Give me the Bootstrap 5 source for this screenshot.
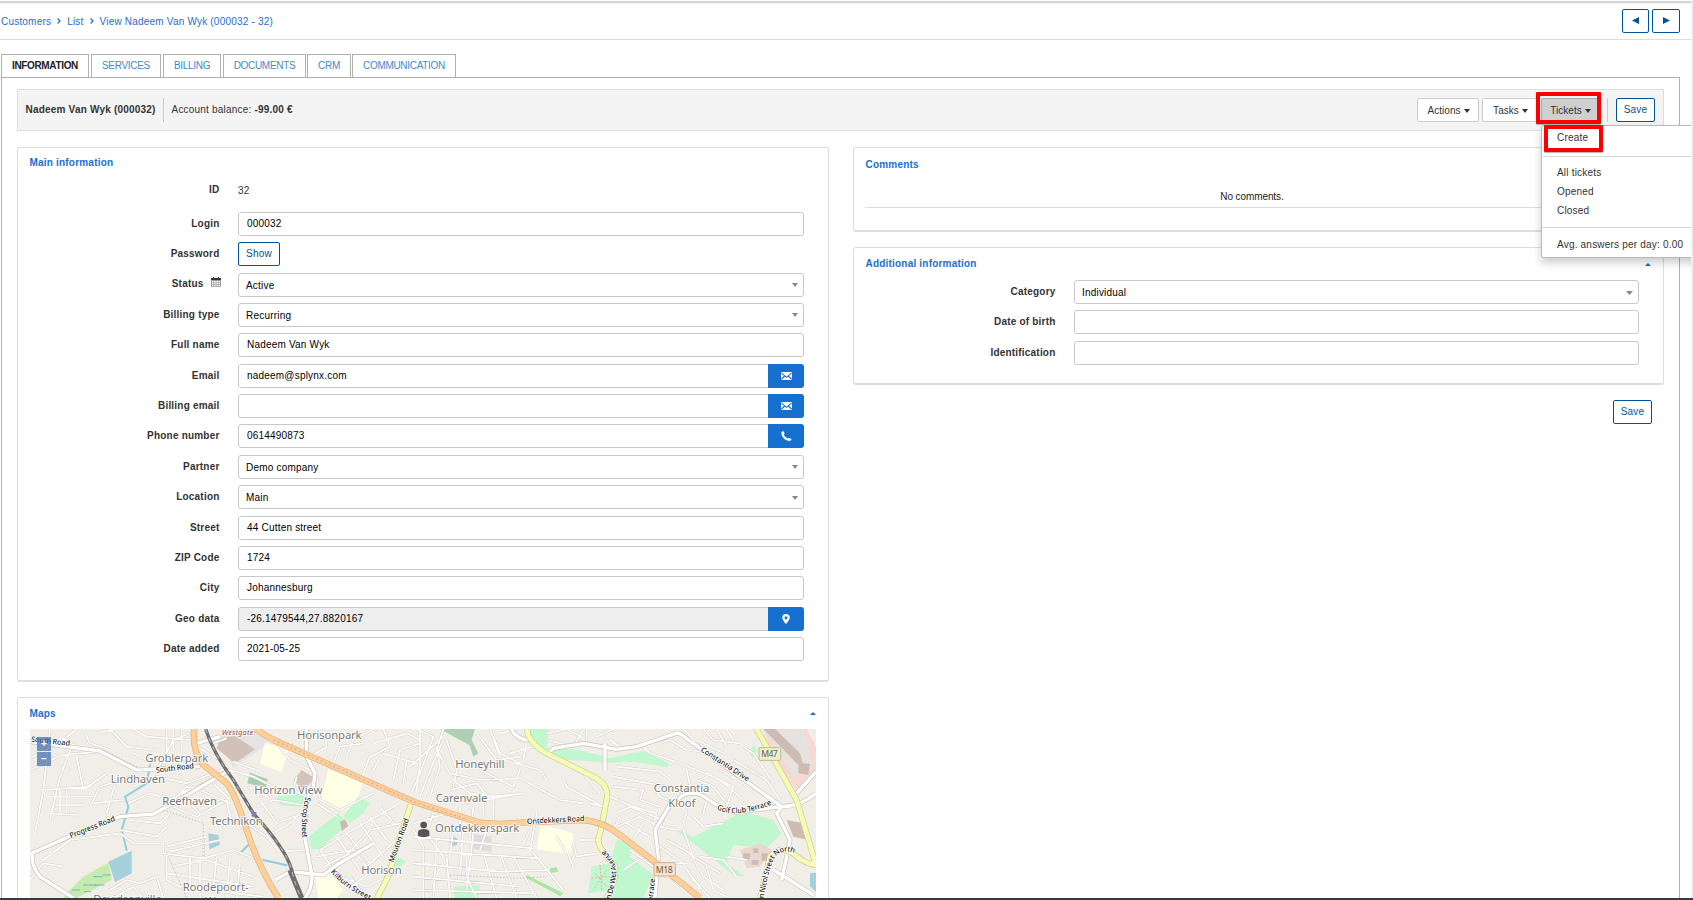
<!DOCTYPE html>
<html lang="en">
<head>
<meta charset="utf-8">
<title>View Nadeem Van Wyk</title>
<link href="https://cdn.jsdelivr.net/npm/bootstrap@5.3.0/dist/css/bootstrap.min.css" rel="stylesheet">
<style>
body{font-family:"Liberation Sans",Arial,sans-serif;font-size:10px;line-height:14px;letter-spacing:.2px;color:#333;height:900px;overflow:hidden;background:#fff}
a{text-decoration:none}
.page-wrap{height:900px;border-right:2px solid #f0f0f0;overflow:hidden}
.topline{height:4px;background:linear-gradient(#fff 0 1px,#d6d8d8 1px 3px,#efefef 3px)}
.crumbs{height:36px;border-bottom:1px solid #ddd;padding:0 11px 0 1px;color:#1a6fcf}
.crumbs a{color:#1a6fcf}
.crumbs svg{margin:0 6px 1px 6px}
.btn{--bs-btn-font-size:10px;--bs-btn-line-height:14px;--bs-btn-border-radius:2px;height:24px;padding:0;letter-spacing:.2px;display:inline-flex;align-items:center;justify-content:center}
.btn-blue{border:1px solid #00549a;color:#00549a;background:#fff}
.btn-plain{border:1px solid #ccc;color:#333;background:#fff;letter-spacing:.05px;padding:2px 0 0 1px}
.btn-plain svg{margin-left:3px}
.tabs-line{margin:14px 0 0 1px;gap:2px;position:relative;z-index:1;height:23px}
.tabs-line .nav-link{border:1px solid #b0b0b0;border-bottom:0;border-radius:0;padding:4px 0 0;height:23px;line-height:14px;color:#428bca;letter-spacing:-.3px;text-align:center;background:#fff}
.tabs-line .nav-link.active{color:#222;font-weight:700;letter-spacing:-.35px}
.tab-body{margin:0 11px 0 1px;border:1px solid #b0b0b0;padding:11px 15px 0 15px;height:860px}
.infobar{height:42px;background:#f4f4f4;border:1px solid #ddd;padding:0 8px 0 7.5px}
.vline{width:1px;height:24px;background:#ccc}
.panel{border:1px solid #ddd;border-bottom-width:2px;border-radius:3px;background:#fff;position:relative}
.panel-name{color:#1a6fcf;font-weight:700;padding-left:11.5px}
.frow{height:24.36px;margin-bottom:6.03px;display:flex}
.flabel{width:201.5px;margin-right:18.5px;text-align:right;font-weight:700;line-height:23px;flex:none}
.fbox{width:566px}
.form-control{height:24px;border:1px solid #c8c8c8;border-radius:3px;padding:0 8px;font-size:10px;line-height:22px;color:#000;min-height:0}
.pick{padding:2px 5px 0 7px;display:flex;justify-content:space-between;align-items:center}
.pick svg{margin-top:-1px}
.off{background:#eee}
.input-group{height:24px;width:566px}
.icobtn{width:36px;background:#1570d0;border:0;border-radius:0 3px 3px 0}
.fold{position:absolute;right:12px}
.drop{position:absolute;left:0;top:27px;width:170px;height:133px;background:#fff;border:1px solid #bbb;border-radius:3px;box-shadow:0 5px 9px rgba(0,0,0,.2);z-index:5;padding:5px 0}
.drop a{display:block;color:#333;padding-left:15px;height:19px;line-height:14px;white-space:nowrap}
.drop hr{margin:0;border:0;border-top:1px solid #d8d8d8;opacity:1}
.ring{position:absolute;border:4px solid #fb0000;border-radius:1px;z-index:8;box-shadow:0 1px 1px rgba(0,0,0,.3)}
.zoomer{position:absolute;left:7px;top:8px;display:grid;gap:1px}
.zoomer span{width:14px;height:14px;background:rgba(60,105,170,.7);color:#fff;font-weight:700;text-align:center;line-height:13px;letter-spacing:0}
.floorbar{position:fixed;left:0;right:0;bottom:0;height:2px;background:#323c41;z-index:9}
.mapart{display:block}
.mapart text{font-family:"Noto Sans",sans-serif;letter-spacing:0;paint-order:stroke;stroke:#fff;stroke-width:5px;stroke-linejoin:round}
.place{font-size:34px;fill:#777}
.street{font-size:22.5px;fill:#222;font-weight:500}
</style>
</head>
<body>
<svg width="0" height="0" class="position-absolute">
 <symbol id="dn" viewBox="0 0 6 4"><path d="M0 0h6L3 4z"/></symbol>
 <symbol id="up" viewBox="0 0 6 3"><path d="M0 3h6L3 0z"/></symbol>
 <symbol id="mail" viewBox="0 0 11 8"><path fill="#fff" d="M0 0h11v8H0z"/><path d="M.3.8 5.5 5.3 10.7.8M.3 7.3 3.700 4M10.700 7.300 7.300 4" fill="none" stroke="#1570d0" stroke-width="1.1"/></symbol>
</svg>
<div class="page-wrap">
 <div class="topline"></div>
 <div class="crumbs d-flex align-items-center justify-content-between">
  <div><a href="#">Customers</a><svg width="4" height="6" viewBox="0 0 4 6"><path d="M.6.5 3 3 .6 5.5" fill="none" stroke="#1a6fcf" stroke-width="1.2"/></svg><a href="#">List</a><svg width="4" height="6" viewBox="0 0 4 6"><path d="M.6.5 3 3 .6 5.5" fill="none" stroke="#1a6fcf" stroke-width="1.2"/></svg><a href="#">View Nadeem Van Wyk (000032 - 32)</a></div>
  <div class="d-flex pb-0" style="gap:3px;margin-top:-1px">
   <button class="btn btn-blue" style="width:27px"><svg width="7" height="7"><path d="M7 0v7L0 3.5z" fill="#00549a"/></svg></button>
   <button class="btn btn-blue" style="width:28px"><svg width="7" height="7"><path d="M0 0v7l7-3.5z" fill="#00549a"/></svg></button>
  </div>
 </div>
 <nav class="nav tabs-line flex-nowrap">
  <a class="nav-link active" style="width:88px">INFORMATION</a>
  <a class="nav-link" style="width:70px">SERVICES</a>
  <a class="nav-link" style="width:58px">BILLING</a>
  <a class="nav-link" style="width:83px">DOCUMENTS</a>
  <a class="nav-link" style="width:44px;margin-left:-1px">CRM</a>
  <a class="nav-link" style="width:104px;margin-left:-1px">COMMUNICATION</a>
 </nav>
 <div class="tab-body">
  <div class="infobar d-flex align-items-center">
   <b>Nadeem Van Wyk (000032)</b><span class="vline" style="margin:0 8px 0 7px"></span><span>Account balance: <b>-99.00 €</b></span>
   <button class="btn btn-plain ms-auto" style="width:62px">Actions<svg width="6" height="4" fill="#333"><use href="#dn"/></svg></button>
   <button class="btn btn-plain" style="width:56px;margin-left:3px">Tasks<svg width="6" height="4" fill="#333"><use href="#dn"/></svg></button>
   <div class="position-relative" style="margin-left:3px">
    <button class="btn btn-plain" style="width:58px;background:#cfcfcf;border-color:#aaa">Tickets<svg width="6" height="4" fill="#333"><use href="#dn"/></svg></button>
    <div class="ring" style="left:-5px;top:-6px;width:65px;height:32px"></div>
    <div class="drop"><a>Create</a><hr style="margin:6px 0 9px"><a>All tickets</a><a>Opened</a><a>Closed</a><hr style="margin:4px 0 10px"><a>Avg. answers per day: 0.00</a></div>
    <div class="ring" style="left:3px;top:27px;width:59px;height:27px"></div>
   </div>
   <span class="vline" style="margin:0 8px"></span>
   <button class="btn btn-blue" style="width:39px">Save</button>
  </div>
  <div class="d-flex align-items-start justify-content-between" style="margin-top:16px">
   <div style="width:812px">
    <section class="panel" style="height:535px">
     <div class="panel-name" style="padding-top:8px;height:34px">Main information</div>
     <div class="frow" style="margin-bottom:5.5px"><div class="flabel" style="line-height:15px">ID</div><div style="line-height:17px">32</div></div>
     <div class="frow"><div class="flabel">Login</div><div class="form-control fbox">000032</div></div>
     <div class="frow"><div class="flabel">Password</div><button class="btn btn-blue" style="width:42px">Show</button></div>
     <div class="frow"><div class="flabel" style="line-height:22px">Status <svg class="ms-1" style="margin:-3px -1px 0 0" width="10" height="10" viewBox="0 0 10 10"><path d="M0 1h10v9H0z" fill="#999"/><path d="M0 1h10v2H0zM2 0h1v1H2zM7 0h1v1H7z" fill="#333"/><path d="M1 4h1.500v1.500H1zM3.200 4h1.500v1.500H3.200zM5.400 4h1.500v1.500H5.400zM7.600 4h1.500v1.500H7.600zM1 6h1.500v1.300H1zM3.200 6h1.500v1.300H3.200zM5.400 6h1.500v1.300H5.400zM7.600 6h1.500v1.300H7.600zM1 8h1.500v1.300H1zM3.200 8h1.500v1.300H3.200zM5.400 8h1.500v1.300H5.400zM7.600 8h1.500v1.300H7.600z" fill="#fff"/></svg></div><div class="form-control fbox pick">Active<svg width="6" height="4" fill="#888"><use href="#dn"/></svg></div></div>
     <div class="frow"><div class="flabel">Billing type</div><div class="form-control fbox pick">Recurring<svg width="6" height="4" fill="#888"><use href="#dn"/></svg></div></div>
     <div class="frow"><div class="flabel">Full name</div><div class="form-control fbox">Nadeem Van Wyk</div></div>
     <div class="frow"><div class="flabel">Email</div><div class="input-group"><div class="form-control">nadeem@splynx.com</div><button class="btn icobtn"><svg width="11" height="8"><use href="#mail"/></svg></button></div></div>
     <div class="frow"><div class="flabel">Billing email</div><div class="input-group"><div class="form-control"></div><button class="btn icobtn"><svg width="11" height="8"><use href="#mail"/></svg></button></div></div>
     <div class="frow"><div class="flabel">Phone number</div><div class="input-group"><div class="form-control">0614490873</div><button class="btn icobtn"><svg width="11" height="10" viewBox="0 0 11 10"><path d="M.3 1.500Q1 0 2.300 0L3.700 2.600 2.700 3.800Q4 6.200 6.700 7.400L7.900 6.700 10.700 8.200Q10.200 9.900 8.300 10 4 9.500 1.700 6 .2 3.700.3 1.500z" fill="#fff"/></svg></button></div></div>
     <div class="frow"><div class="flabel">Partner</div><div class="form-control fbox pick">Demo company<svg width="6" height="4" fill="#888"><use href="#dn"/></svg></div></div>
     <div class="frow"><div class="flabel">Location</div><div class="form-control fbox pick">Main<svg width="6" height="4" fill="#888"><use href="#dn"/></svg></div></div>
     <div class="frow"><div class="flabel">Street</div><div class="form-control fbox">44 Cutten street</div></div>
     <div class="frow"><div class="flabel">ZIP Code</div><div class="form-control fbox">1724</div></div>
     <div class="frow"><div class="flabel">City</div><div class="form-control fbox">Johannesburg</div></div>
     <div class="frow"><div class="flabel">Geo data</div><div class="input-group"><div class="form-control off">-26.1479544,27.8820167</div><button class="btn icobtn"><svg width="8" height="10" viewBox="0 0 8 10"><path d="M4 0a3.700 3.700 0 0 1 3.700 3.700C7.700 6 4 10 4 10S.3 6 .3 3.700A3.700 3.700 0 0 1 4 0zm0 2.200a1.500 1.500 0 1 0 0 3 1.500 1.500 0 0 0 0-3z" fill="#fff" fill-rule="evenodd"/></svg></button></div></div>
     <div class="frow"><div class="flabel">Date added</div><div class="form-control fbox">2021-05-25</div></div>
    </section>
    <section class="panel" style="height:260px;margin-top:15px">
     <div class="panel-name" style="padding-top:9px;height:31px">Maps</div>
     <svg class="fold" style="top:14px" width="6" height="3" fill="#1a6fcf"><use href="#up"/></svg>
     <div class="position-relative" style="margin-left:12px;width:786px">
     <svg class="mapart" width="786" height="169" viewBox="90 117 2358 507">
      <defs>
       <g id="lanes">
        <path d="M90 205 190 150 230 117M90 240 185 195 300 185M105 430 130 300 150 117M150 390 180 260 215 170M185 145 250 180M150 320H270M165 345H250M180 300V370M200 300V370M150 370 230 375M130 300 270 290M230 200 250 300 320 250M270 350 300 290 390 260 440 270M280 340 370 330M320 370 345 280M400 290 470 260 560 280 680 235M385 340 450 310 520 330 570 300M390 390 480 400 510 370M470 240 520 150 570 130M500 117V230M520 117V180M545 117V190M570 150 440 140 400 117M330 117 380 170 470 180M250 117 270 160 330 180M290 130 350 117M400 190 460 220M590 170 660 210 700 250M540 310 640 270M520 350 590 380 680 330M560 330 600 370M600 300 690 340M640 280 680 320M500 350 560 290 600 300"/>
        <path d="M90 570 130 520 190 530M130 510 210 450 360 430 400 460 490 460V490L610 505 700 480 760 505M360 420 470 440 500 410M500 490V570L560 600V624M510 530 620 510 760 560M570 500V600M600 505V624M650 500 640 600M690 500 680 624M500 550 760 590M540 590 790 620M720 520 710 624M330 600 380 570 420 580 470 560 490 624M340 624 400 590 430 624M500 470 620 440M510 485 660 450M610 440V500M680 330 690 380 720 420M740 400 800 440 870 400 920 350M830 400 910 370M800 440 840 485 920 480M690 240 760 260 840 300M700 215 770 240 790 250M780 330 830 400M770 350 820 330 910 345M610 130 640 160 680 145M720 300 780 290M830 160 870 210 930 240M920 210 950 260 960 330M870 160 890 190M890 260 880 300 920 320M960 330 1020 360 1120 310M950 340 1010 380M960 480 1040 430 1200 340M950 500 1060 480 1100 530 1200 440M970 530 1050 490M1000 540 1110 420 1200 400M1040 430 1110 520M1080 400 1150 500M1110 380 1160 450M1140 350 1190 410M1010 440 1080 540M960 480 1000 540M1020 560 1100 590 1180 550M1040 600 1120 540M1100 624 1050 560M930 200 980 170 970 117M1000 220 1020 170 1090 160M1040 200 1060 150 1120 117M1090 250 1110 200 1170 170 1150 117M1120 240 1150 190 1250 220M1180 270 1200 180 1260 160M1210 280 1220 210M1250 300 1260 220 1260 117M1120 160 1220 130 1260 150"/>
        <path d="M1230 320 1260 250 1300 140 1250 117M1260 320 1290 240 1330 150M1230 230 1330 140M1330 117 1310 180 1350 250 1440 270 1560 265 1680 330 1750 340M1290 320 1320 230 1310 170M1340 150 1370 240 1360 290M1360 270 1410 310 1480 320 1570 310M1350 300 1430 280 1470 330M1380 340 1570 310M1450 380V310M1480 390V310M1380 350V440M1410 440 1420 350M1240 400 1340 370M1240 440 1600 475M1300 370 1280 430 1330 500M1360 410 1350 500M1390 410 1380 560M1420 430 1400 600M1460 420 1440 480M1240 480 1620 505M1240 520 1500 545 1640 540M1240 560 1560 590M1240 600 1600 610M1270 470V624M1310 460 1300 624M1340 500 1350 624M1400 500 1400 560 1430 624M1450 490 1490 624M1500 490 1550 624M1540 500 1610 624M1600 490 1690 600M1570 460 1600 400M1590 480 1610 370M1240 420 1270 470M1480 140 1500 190 1560 220M1430 130 1490 210 1560 200M1510 210 1620 240 1640 270M1530 190 1600 170M1440 240 1540 290 1560 240M1470 117 1500 200M1500 130 1550 117M1580 150 1570 210M1690 260 1700 290 1810 350 1770 340M1740 240 1800 310"/>
        <path d="M1640 150 1720 170 1750 120M1640 130 1700 117 1750 145M1760 117V170M1790 140 1840 117M1830 150 1870 180M1840 260 2000 290 2060 310 2050 360M1840 290 1930 300 1920 330 1980 350M1850 230 1980 245 2010 270M1830 320 1900 350 1970 370 1960 410M1850 370 1890 350 1990 390M1850 410 1920 380 1980 410M1860 380 1840 420M1880 400 1950 440M1930 400 1900 450M1960 290 1980 320 2030 340M1920 160 1950 190 2040 220 2140 260M1980 160 2010 150 2060 180M2060 240 2070 290 2110 300M2090 270 2140 290 2180 340M2120 250 2200 290 2180 350M2070 180 2130 190M2090 150 2170 190M2130 190 2180 220M2160 240 2250 290M2050 117 2100 170M2110 117 2140 150 2220 160M2150 117 2180 170M2180 117 2200 150M2230 170 2260 190 2320 280M2200 210 2300 270 2340 330M2160 270 2220 320M2010 340 1980 410 2030 420M2040 330 2060 370 2050 400M2080 380 2110 410 2170 400M2120 330 2110 370M2000 450 2070 490 2110 560 2170 600M1980 470 2050 520 2080 570 2130 624M2050 420 2080 500 2160 550M2100 500 2170 510 2210 560M2180 500 2240 510M1980 520 2060 520M1970 550 2060 580M1950 570 2000 550 2060 610M2060 540 2100 590 2080 624M2120 530 2140 600 2180 620M1870 540 1930 500M1890 480 1960 530M1720 460 1730 500 1790 490M1740 450 1800 450M1720 530 1700 480M1670 440 1700 490"/>
       </g>
       <g id="mains">
        <path d="M90 155 300 183 410 240 600 230M90 492 230 430 360 380 460 372 500 350 690 240M98 490Q90 520 120 560L220 624M590 160 660 140M920 117V200L945 250 940 290 920 330 912 430 935 550Q940 590 915 624M825 570 870 545 970 555 1010 525 1120 460M1535 117Q1550 150 1590 150M1650 185 1660 175 1750 160 1850 178 1910 170 2035 128M1815 160V240M2035 128 2345 350Q2400 350 2448 310M2345 350 2330 370 2370 450 2360 500 2345 570M1965 624 1975 500 1965 420 2010 345 2050 315Q2090 300 2120 325 2190 375 2220 365L2345 350M2320 540 2370 570 2440 615M2390 310 2448 245"/>
       </g>
      </defs>
      <rect x="90" y="117" width="2358" height="507" fill="#f1eee8"/>
      <path d="M880 270 905 240 945 265 910 300z" fill="#d4c4bb"/><path d="M700 235 790 170 810 145 760 117H690L650 140z" fill="#e6e4e2"/><path d="M660 145 705 138 765 178 705 220 650 175z" fill="#d1c1b9"/>
      <path d="M795 158 865 180 845 247 780 222zM985 237 1088 280 1065 350 1030 362 963 332zM945 560 990 545 1030 600 1010 624H955zM1622 403 1720 430 1713 493 1610 478z" fill="#ffffe5"/>
      <path d="M750 248 803 268 797 292 742 280z" fill="#a4cfb0"/>
      <path d="M830 320 905 312 915 330 905 352 840 344zM925 440 1015 370 1045 400 960 478H935zM1030 378 1075 320 1110 338 1090 370 1050 400zM1180 495 1218 515 1200 530H1178zM1590 117H1645L1640 175 1740 180 1830 205 1930 182 2010 222 2000 232 1900 215 1820 218 1690 208 1620 185 1590 150zM2020 415 2080 440 2150 405 2230 365 2320 390 2345 430 2300 475 2200 465 2180 520 2235 560 2200 555 2080 460zM1850 450 1900 460 1890 500 1960 555 1930 624H1810L1830 600 1765 610 1775 530 1830 520zM1360 590 1440 585 1435 624H1363z" fill="#c0f7cf"/>
      <path d="M1320 117H1425L1415 150 1435 190 1420 200 1408 165 1380 150z" fill="#add1b5"/><path d="M1580 555 1690 610 1680 618 1575 562zM1650 535 1670 532 1675 545 1650 548z" fill="#a8e6a1"/>
      <path d="M200 610 250 560 325 518 335 570 230 624H190z" fill="#c6ebae"/><path d="M215 600h25m10-15h25m5-25h28m-55 45h20m10-20h30m-5-30h25m-60 30h15" stroke="#6fb7c4" stroke-width="3"/>
      <path d="M325 515 395 482V550L345 577zM625 430 655 435 660 465 628 478z" fill="#a7d0dd"/><circle cx="1361" cy="454" r="13" fill="#a7d0dd"/><path d="M2430 550 2448 548V605L2430 590z" fill="#a7d0dd"/>
      <path d="M2290 117H2420L2448 170V260L2390 300 2320 210z" fill="#f7d8d4"/><path d="M2300 130 2410 117 2440 230 2380 260z" fill="#e5e2e0"/><path d="M2290 117H2325L2400 190 2410 225 2390 220zM2395 218 2430 222 2425 255 2395 250zM2360 390 2410 400 2425 450 2380 440z" fill="#cdbcb4"/>
      <path d="M2220 480 2280 460 2315 480 2280 530 2240 535z" fill="#e8d8d0"/><path d="M2230 490h20v18h-20zM2260 475h15v14h-15zM2255 510h20v14h-20zM2285 490h18v22h-18zM1020 395 1035 388 1045 408 1025 424z" fill="#cdbcb4"/>
      <path d="M1420 432 1475 440V486L1418 478z" fill="#dfdcdb"/><path d="M2245 182 2265 165 2270 185 2258 205z" fill="#c0f7cf"/>
      <g fill="none" stroke="#92cddf" stroke-width="6" stroke-linecap="round"><path d="M450 225 440 280 375 320 385 350 365 420 380 480M720 490 745 465M790 510 860 526"/></g>
      <g fill="none" stroke-linejoin="round"><use href="#lanes" stroke="#d2cdc5" stroke-width="8"/><use href="#lanes" stroke="#fff" stroke-width="5"/><use href="#mains" stroke="#c8c3bc" stroke-width="14"/><use href="#mains" stroke="#fff" stroke-width="10"/></g>
      <path d="M310 180 430 240M500 350 660 245M490 360 610 400V500M500 490 560 624M1350 555 1560 565 1640 560" fill="none" stroke="#c8b8bd" stroke-width="3" stroke-dasharray="4 6"/>
      <path d="M1785 550 1820 590M1820 540 1780 600M1775 565 1830 560M1800 525 1805 600" stroke="#f09080" stroke-width="2" stroke-dasharray="5 5"/>
      <g fill="none" stroke-linejoin="round">
       <path d="M1582 117Q1580 150 1630 185L1780 260Q1830 285 1820 330L1800 430Q1785 460 1815 490L1845 530Q1850 570 1820 624M1232 345 1180 500Q1175 550 1130 624M2270 117 2390 330 2448 525M2280 624 2310 500Q2340 465 2380 490 2410 520 2448 525" stroke="#c9cf83" stroke-width="18"/>
       <path d="M1582 117Q1580 150 1630 185L1780 260Q1830 285 1820 330L1800 430Q1785 460 1815 490L1845 530Q1850 570 1820 624M1232 345 1180 500Q1175 550 1130 624M2270 117 2390 330 2448 525M2280 624 2310 500Q2340 465 2380 490 2410 520 2448 525" stroke="#f5fab9" stroke-width="14"/>
       <path d="M583 117Q575 180 610 225L680 280Q705 310 740 420T835 624M765 117 820 150 1240 335 1440 398Q1500 405 1560 398L1750 390Q1810 395 1860 435L1970 520 2100 624" stroke="#e8ad70" stroke-width="19"/>
       <path d="M583 117Q575 180 610 225L680 280Q705 310 740 420T835 624M765 117 820 150 1240 335 1440 398Q1500 405 1560 398L1750 390Q1810 395 1860 435L1970 520 2100 624" stroke="#fbd09c" stroke-width="15"/>
       <path d="M820 150 1240 335 1400 388" stroke="#d29a8c" stroke-width="3" stroke-dasharray="6 8"/>
       <path d="M617 117Q640 190 700 270L760 370Q860 480 875 540T905 624" stroke="#6d6d6d" stroke-width="10"/><path d="M870 540 905 624" stroke="#6d6d6d" stroke-width="16"/><path d="M617 117Q640 190 700 270L760 370Q860 480 875 540T905 624" stroke="#c8c8c8" stroke-width="3" stroke-dasharray="14 14"/>
      </g>
      <path d="M755 366h14v14h-14z" fill="#7b7fb5"/>
      <g class="place">
       <text x="436" y="217" textLength="189">Groblerpark</text><text x="332" y="278" textLength="163">Lindhaven</text><text x="487" y="346" textLength="164">Reefhaven</text><text x="630" y="405" textLength="158">Technikon</text><text x="763" y="311" textLength="204">Horizon View</text><text x="891" y="147" textLength="194">Horisonpark</text><text x="1084" y="553" textLength="121">Horison</text><text x="548" y="602" textLength="198">Roodepoort-</text><text x="280" y="638" textLength="205">Davidsonville</text><text x="615" y="645" textLength="75">West</text>
       <text x="1366" y="235" textLength="147">Honeyhill</text><text x="1307" y="337" textLength="155">Carenvale</text><text x="1305" y="425" textLength="253">Ontdekkerspark</text><text x="1961" y="307" textLength="167">Constantia</text><text x="2005" y="350" textLength="81">Kloof</text>
      </g>
      <text x="665" y="136" textLength="95" font-size="23" font-style="italic" style="fill:#93404a">Westgate</text>
      <defs><path id="t1" d="M93 155 215 168"/><path id="t2" d="M469 248 588 234"/><path id="t3" d="M212 445 352 390"/><path id="t4" d="M917 320Q900 385 908 450"/><path id="t5" d="M1180 518 1230 382"/><path id="t6" d="M992 546Q1030 595 1120 635"/><path id="t7" d="M1581 402 1760 393"/><path id="t8" d="M2101 183 2250 280"/><path id="t9" d="M2150 356Q2200 390 2325 340"/><path id="t10" d="M1828 640Q1852 570 1848 535T1788 462"/><path id="t11" d="M2288 645Q2300 560 2320 510 2345 465 2405 500"/><path id="t12" d="M1958 634 1966 555"/></defs>
      <g class="street">
       <text textLength="117"><textPath href="#t1">South Road</textPath></text><text textLength="114"><textPath href="#t2">South Road</textPath></text><text textLength="145"><textPath href="#t3">Progress Road</textPath></text><text textLength="125"><textPath href="#t4">Sonop Street</textPath></text><text textLength="138"><textPath href="#t5">Mouton Road</textPath></text><text textLength="145"><textPath href="#t6">Kilburn Street</textPath></text><text textLength="173"><textPath href="#t7">Ontdekkers Road</textPath></text><text textLength="168"><textPath href="#t8">Constantia Drive</textPath></text><text textLength="172"><textPath href="#t9">Golf Club Terrace</textPath></text><text textLength="176"><textPath href="#t10">an De Wet Avenue</textPath></text><text textLength="212"><textPath href="#t11">am Nicol Street North</textPath></text><text><textPath href="#t12">errace</textPath></text>
      </g>
      <rect x="2277" y="173" width="65" height="38" rx="3" fill="#edf0d0" stroke="#b9be8a" stroke-width="3"/><rect x="1962" y="518" width="64" height="40" rx="3" fill="#f9e2cb" stroke="#d3ab88" stroke-width="3"/>
      <g font-size="26" fill="#6b5f45"><text x="2284" y="202" textLength="49" style="stroke:none">M47</text><text x="1967" y="548" textLength="51" style="stroke:none">M18</text></g>
      <g fill="#555"><circle cx="1271" cy="405" r="10"/><path d="M1254 438V425Q1256 417 1271 417T1288 425V438Q1271 445 1254 438z"/></g>
     </svg>
     <div class="zoomer"><span>+</span><span>−</span></div>
     </div>
    </section>
   </div>
   <div style="width:811px">
    <section class="panel" style="height:85px">
     <div class="panel-name" style="padding-top:10px;height:42px">Comments</div>
     <div class="text-center" style="margin:0 12px 0 11px;padding-right:12px;height:18px;border-bottom:1px solid #ddd;color:#222;letter-spacing:-.1px">No comments.</div>
    </section>
    <section class="panel" style="height:138px;margin-top:15px">
     <div class="panel-name" style="padding-top:9px;height:32px">Additional information</div>
     <svg class="fold" style="top:15px" width="6" height="3" fill="#1a6fcf"><use href="#up"/></svg>
     <div class="frow"><div class="flabel">Category</div><div class="form-control fbox pick" style="width:565px">Individual<svg width="7" height="4" viewBox="0 0 6 4" preserveAspectRatio="none" fill="#888"><path d="M0 0h6L3 4z"/></svg></div></div>
     <div class="frow"><div class="flabel">Date of birth</div><div class="form-control fbox" style="width:565px"></div></div>
     <div class="frow"><div class="flabel">Identification</div><div class="form-control fbox" style="width:565px"></div></div>
    </section>
    <div class="text-end" style="margin:15px 12px 0 0"><button class="btn btn-blue" style="width:39px">Save</button></div>
   </div>
  </div>
 </div>
</div>
<div class="floorbar"></div>
<script src="https://cdn.jsdelivr.net/npm/bootstrap@5.3.0/dist/js/bootstrap.bundle.min.js"></script>
</body>
</html>
